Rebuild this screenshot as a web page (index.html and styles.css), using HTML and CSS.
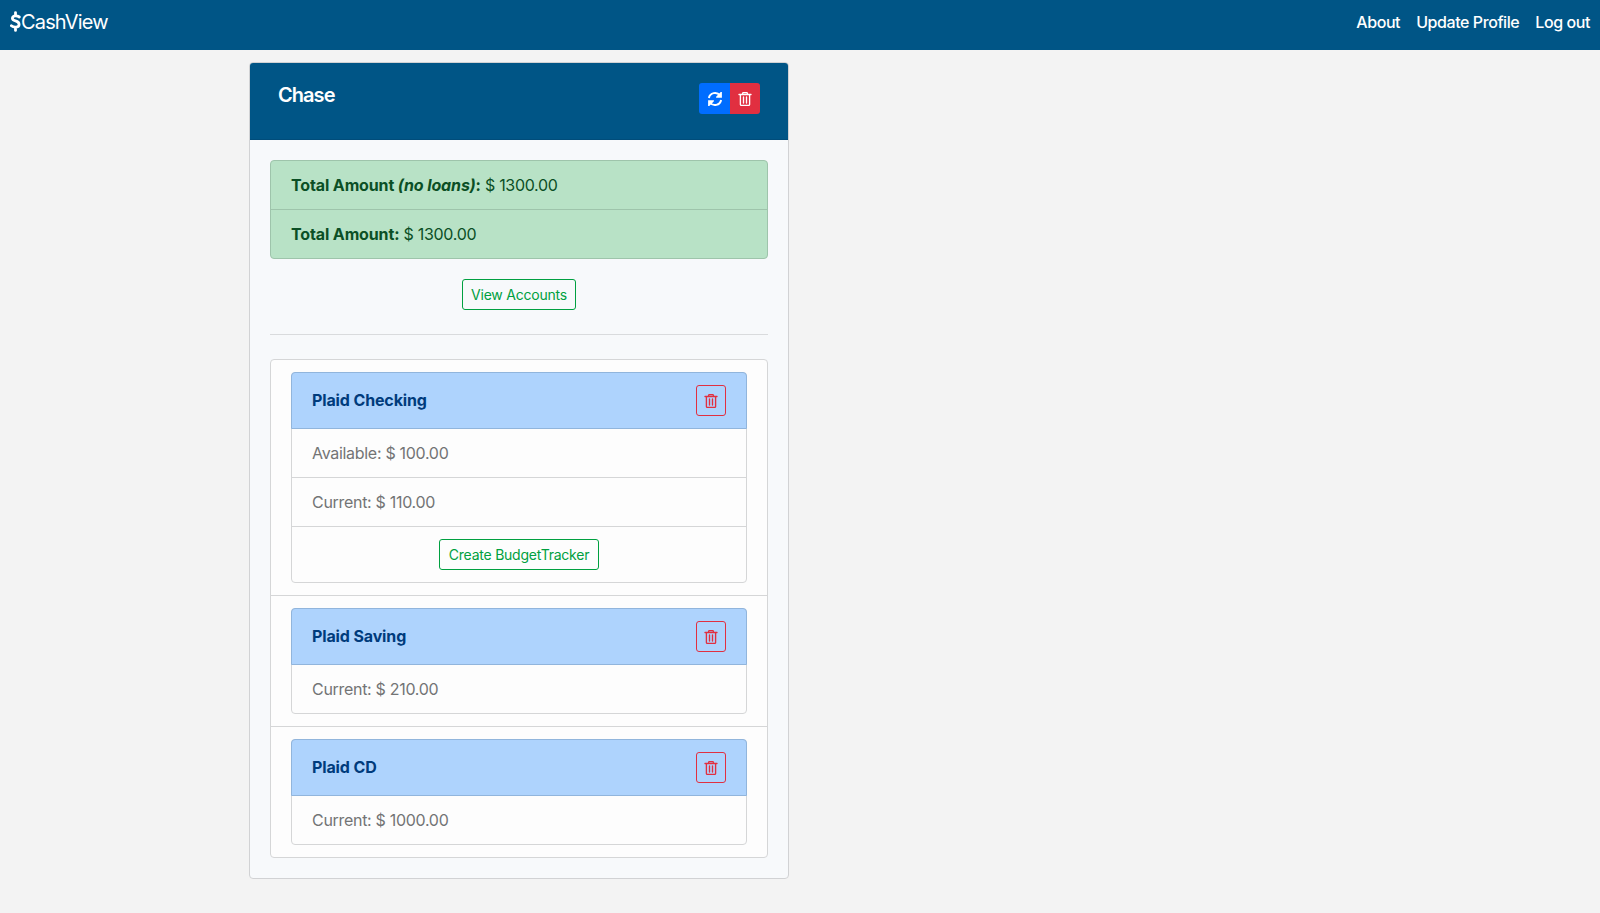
FILE: index.html
```
<!DOCTYPE html>
<html lang="en">
<head>
<meta charset="utf-8">
<title>CashView</title>
<link rel="stylesheet" href="styles.css">
</head>
<body>
<svg class="defs" width="0" height="0" aria-hidden="true">
  <symbol id="trash" viewBox="0 0 14 16">
    <path d="M1 3.5h12M4.2 3.4L5 1.6h4l.8 1.8M2.4 3.8v9.7q0 .9.9.9h7.4q.9 0 .9-.9V3.8M5.5 6v6M8.5 6v6" fill="none" stroke="currentColor" stroke-width="1.35" stroke-linecap="round"/>
  </symbol>
  <symbol id="refresh" viewBox="0 0 16 16">
    <path d="M1.9 7A6.2 6.2 0 0 1 13 4.5M14.1 9A6.2 6.2 0 0 1 3 11.5" fill="none" stroke="currentColor" stroke-width="2"/>
    <path d="M14.9 1v5.8H9.1V5.7L13.7 1zM1.1 15V9.2h5.8v1.1L2.3 15z" fill="currentColor"/>
  </symbol>
</svg>
<nav class="navbar">
  <a class="brand"><svg class="dollar" viewBox="0 0 11 21"><path d="M9.3 6Q7.8 4.9 5.6 4.9 2.4 4.9 2.4 7.3 2.4 9.1 5.5 9.9 9.1 10.9 9.1 13.4 9.1 16.1 5.5 16.1 3 16.1 1.4 14.7M5.5 1.6v3M5.5 16.4v3" fill="none" stroke="currentColor" stroke-width="2.8" stroke-linecap="round"/></svg><span>CashView</span></a>
  <div class="links"><a>About</a><a>Update Profile</a><a>Log out</a></div>
</nav>
<main class="card">
  <header class="card-header">
    <h1>Chase</h1>
    <div class="group">
      <button class="btn icon primary" aria-label="Refresh"><svg class="sync"><use href="#refresh"/></svg></button><button class="btn icon danger" aria-label="Delete"><svg class="bin"><use href="#trash"/></svg></button>
    </div>
  </header>
  <div class="card-body">
    <ul class="list totals">
      <li><b>Total Amount <i>(no loans)</i>:</b> $ 1300.00</li>
      <li><b>Total Amount:</b> $ 1300.00</li>
    </ul>
    <button class="btn outline view">View Accounts</button>
    <hr>
    <ul class="list accounts">
      <li>
        <ul class="list">
          <li class="name"><b>Plaid Checking</b><button class="btn icon remove" aria-label="Delete"><svg class="bin"><use href="#trash"/></svg></button></li>
          <li>Available: $ 100.00</li>
          <li>Current: $ 110.00</li>
          <li class="action"><button class="btn outline create">Create BudgetTracker</button></li>
        </ul>
      </li>
      <li>
        <ul class="list">
          <li class="name"><b>Plaid Saving</b><button class="btn icon remove" aria-label="Delete"><svg class="bin"><use href="#trash"/></svg></button></li>
          <li>Current: $ 210.00</li>
        </ul>
      </li>
      <li>
        <ul class="list">
          <li class="name"><b>Plaid CD</b><button class="btn icon remove" aria-label="Delete"><svg class="bin"><use href="#trash"/></svg></button></li>
          <li>Current: $ 1000.00</li>
        </ul>
      </li>
    </ul>
  </div>
</main>
</body>
</html>
```
FILE: styles.css
```
* { box-sizing: border-box; }
body { margin: 0; background: #f3f3f3; font: 16px/24px Inter, "Liberation Sans", sans-serif; letter-spacing: -0.3px; }
.defs { display: block; }
svg { flex: none; }
.navbar { height: 50px; padding: 7px 10px 0; background: #005586; color: #fff; display: flex; justify-content: space-between; }
.brand { display: flex; height: 30px; font-size: 20px; line-height: 30px; letter-spacing: -0.85px; }
.dollar { width: 11px; height: 21px; margin-top: 4px; }
.links { display: flex; gap: 16px; height: 30px; line-height: 30px; font-weight: 500; letter-spacing: -0.42px; }
.card { width: 540px; margin: 12px 0 0 249px; border: 1px solid #d1d2d4; border-radius: 4px; background: #f7f9fb; }
.card-header { height: 77px; padding: 20px 28px 0; background: #005586; border-bottom: 1px solid #004c7a; border-radius: 3px 3px 0 0; color: #fff; display: flex; justify-content: space-between; }
h1 { margin: 0; font-size: 20px; line-height: 24px; font-weight: 600; letter-spacing: -0.95px; }
.group { display: flex; height: 31px; border-radius: 3px; overflow: hidden; }
.card-body { padding: 20px; display: flex; flex-direction: column; }
.list { list-style: none; margin: 0; padding: 0; border: 1px solid #d5d6d7; border-radius: 4px; background: #fdfdfd; color: #737475; }
.list > li { padding: 12px 20px; border-bottom: 1px solid #d5d6d7; }
.list > li:last-child { border-bottom: 0; }
.totals { background: #b8e2c6; border-color: #9ec4ab; color: #0b4f25; }
.totals > li { border-color: #9ec4ab; }
.list > .name { display: flex; justify-content: space-between; align-items: flex-start; margin: -1px -1px 0; padding: 12px 20px; border: 1px solid #91b5dc; border-radius: 4px 4px 0 0; background: #aed3fd; color: #003b7c; }
.name b { padding-top: 3px; }
.action { display: flex; justify-content: center; }
b { font-weight: 700; letter-spacing: -0.13px; }
hr { width: 100%; height: 1px; margin: 24px 0; border: 0; background: #d9dbdd; }
.btn { height: 31px; padding: 0; border: 1px solid; border-radius: 3px; background: none; font: 14px/21px Inter, "Liberation Sans", sans-serif; letter-spacing: -0.23px; display: flex; align-items: center; justify-content: center; }
.outline { color: #00a040; border-color: #00a040; }
.view { width: 114px; margin-top: 20px; align-self: center; }
.create { width: 160px; }
.icon { width: 30px; }
.group .icon { border: 0; border-radius: 0; color: #fff; }
.group .primary { width: 31px; background: #006dff; }
.danger { background: #e12f40; }
.remove { color: #e12f40; border-color: #e12f40; }
.sync { width: 16px; height: 16px; }
.bin { width: 14px; height: 16px; }
```
